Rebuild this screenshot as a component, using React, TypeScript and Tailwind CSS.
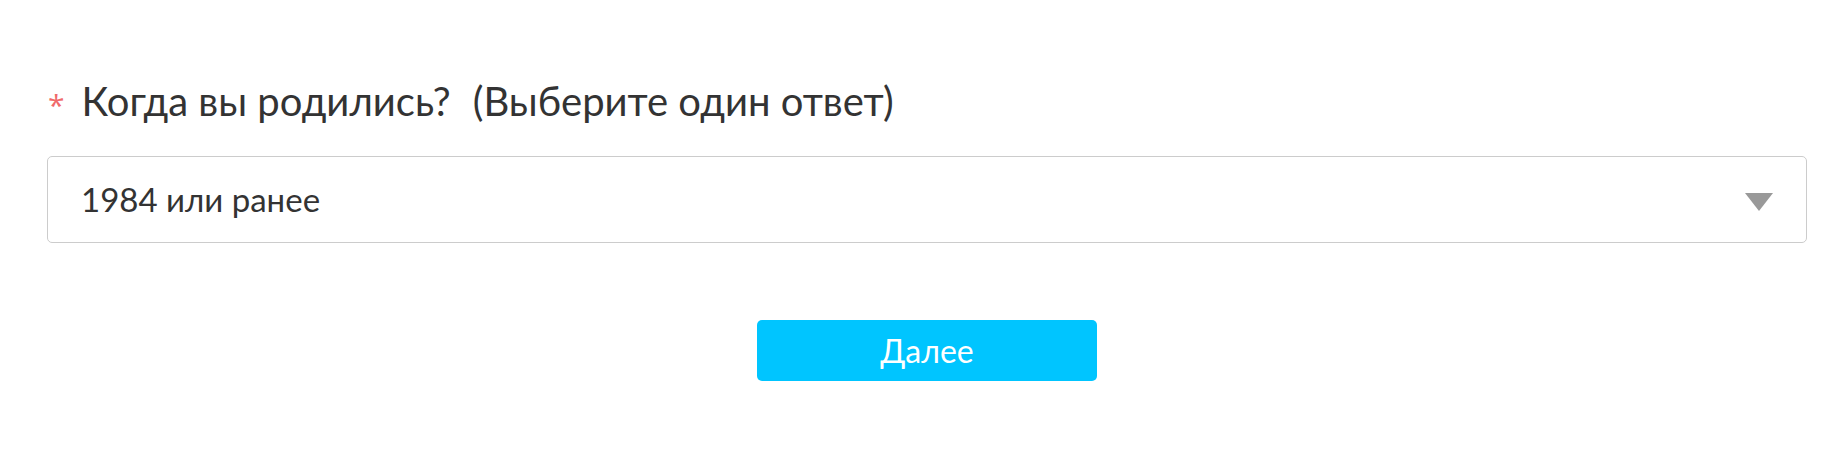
export default function App() {
  return (
    <div className="min-h-[458px] w-full bg-white pl-[47px] pr-[30px] pt-[76px] font-['Lato',sans-serif]">
      <h2 className="flex items-baseline text-[40px] leading-[50px] font-normal text-[#333333]">
        <span className="mr-[17px] ml-[1px] font-['Open_Sans',sans-serif] text-[30px] text-[#f06a6a]">*</span>
        <span>
          Когда вы родились?<span className="ml-[22px]">(Выберите один ответ)</span>
        </span>
      </h2>
      <div className="mt-[26px] flex h-[87px] items-center justify-between rounded-[5px] border border-[#cccccc] bg-white pl-[33px] pr-[33px]">
        <span className="text-[33px] text-[#333333]">1984 или ранее</span>
        <svg width="28" height="18" viewBox="0 0 28 18" className="mt-[4px]">
          <polygon points="0,0 28,0 14,18" fill="#999999" />
        </svg>
      </div>
      <div className="mt-[77px] flex justify-center">
        <button className="h-[61px] w-[340px] rounded-[5px] bg-[#00c5ff] text-[32px] text-white">
          Далее
        </button>
      </div>
    </div>
  )
}
